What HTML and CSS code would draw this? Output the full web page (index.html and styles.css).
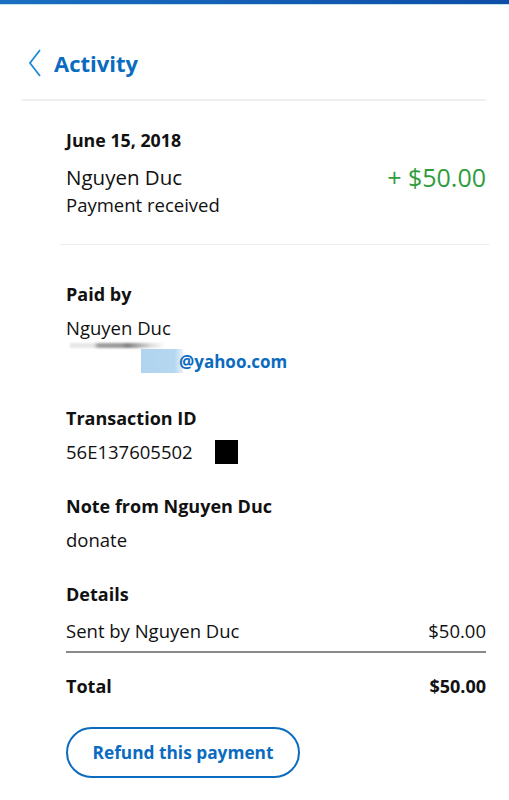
FILE: index.html
```html
<!DOCTYPE html>
<html>
<head>
<meta charset="utf-8">
<link rel="stylesheet" href="styles.css">
</head>
<body>
<div class="topbar"></div>
<header class="header">
  <svg class="back" width="14" height="28" viewBox="0 0 14 28"><polyline points="12,1 2,14 12,27" fill="none" stroke="#1a8bd6" stroke-width="1.8"/></svg>
  <h1 class="title">Activity</h1>
</header>
<main class="content">
  <section class="summary">
    <div class="date">June 15, 2018</div>
    <div class="row">
      <span class="name">Nguyen Duc</span>
      <span class="amount">+ $50.00</span>
    </div>
    <div class="status">Payment received</div>
  </section>
  <section class="details">
    <div class="block">
      <div class="label">Paid by</div>
      <div class="value">Nguyen Duc</div>
      <div class="email">
        <span class="blur-gray"></span>
        <span class="email-line"><span class="blur-blue"></span><span class="email-text">@yahoo.com</span></span>
      </div>
    </div>
    <div class="block">
      <div class="label">Transaction ID</div>
      <div class="value txn">56E137605502<span class="redact"></span></div>
    </div>
    <div class="block">
      <div class="label">Note from Nguyen Duc</div>
      <div class="value">donate</div>
    </div>
    <div class="block">
      <div class="label">Details</div>
      <div class="line-item"><span>Sent by Nguyen Duc</span><span>$50.00</span></div>
      <div class="total"><span>Total</span><span>$50.00</span></div>
    </div>
    <button class="refund">Refund this payment</button>
  </section>
</main>
</body>
</html>
```
FILE: styles.css
```css
* { box-sizing: border-box; }
body {
  margin: 0;
  font-family: "Open Sans", "Noto Sans", sans-serif;
  color: #111;
  background: #fff;
}
.topbar {
  height: 5px;
  background: linear-gradient(90deg, #1a6fc1, #0f4ea6);
  border-bottom: 1px solid #bfe3ef;
}
.header {
  display: flex;
  align-items: center;
  gap: 12px;
  margin: 0 23px 0 22px;
  padding: 44px 0 22px 6px;
  border-bottom: 2px solid #efefef;
}
.back { display: block; }
.title {
  margin: 0;
  font-size: 22px;
  font-weight: 700;
  color: #0b6bbf;
  line-height: 28px;
}
.content { padding: 0 23px 0 66px; }
.summary {
  padding: 26px 4px 26px 6px;
  border-bottom: 1px solid #efefef;
  margin-left: -6px;
  margin-right: -4px;
}
.date { font-weight: 700; font-size: 17.8px; line-height: 26px; }
.row {
  display: flex;
  justify-content: space-between;
  align-items: center;
  margin-top: 10px;
}
.name { font-size: 20.5px; line-height: 28px; }
.amount { font-size: 25px; color: #2f9d3b; line-height: 28px; }
.status { font-size: 18.5px; line-height: 26px; margin-top: 1px; }
.details { padding-top: 36px; }
.block { margin-bottom: 28px; }
.label { font-weight: 700; font-size: 18px; line-height: 26px; }
.value { font-size: 18.5px; line-height: 26px; margin-top: 8px; }
.email { position: relative; height: 36px; }
.blur-gray {
  position: absolute;
  left: 4px; top: 2px;
  width: 95px; height: 5px;
  background: linear-gradient(90deg, #e6e6e6 0%, #e6e6e6 25%, #a0a0a0 30%, #999 55%, #808080 60%, #ddd 85%, #fff 100%);
  filter: blur(0.8px);
}
.email-line {
  position: absolute;
  left: 75px; top: 8px;
  display: flex; align-items: center;
}
.blur-blue {
  width: 42px; height: 24px;
  background: linear-gradient(90deg, #b0d4ef, #b6d7ef 80%, #e8f3fb);
}
.email-text {
  margin-left: -4px;
  font-weight: 700;
  font-size: 17px;
  color: #0b6bbf;
}
.txn { display: flex; align-items: center; }
.redact {
  display: inline-block;
  width: 23px; height: 24px;
  background: #000;
  margin-left: 22px;
}
.line-item {
  display: flex;
  justify-content: space-between;
  font-size: 18.5px;
  line-height: 26px;
  margin-top: 11px;
  padding-bottom: 7px;
  border-bottom: 2px solid #8a8a8a;
}
.total {
  display: flex;
  justify-content: space-between;
  font-size: 18px;
  font-weight: 700;
  line-height: 26px;
  margin-top: 20px;
}
.refund {
  width: 234px;
  height: 51px;
  border: 2px solid #0b6bbf;
  border-radius: 26px;
  background: #fff;
  color: #0b6bbf;
  font-family: inherit;
  font-size: 17.3px;
  font-weight: 700;
  margin-top: 0;
}
```
